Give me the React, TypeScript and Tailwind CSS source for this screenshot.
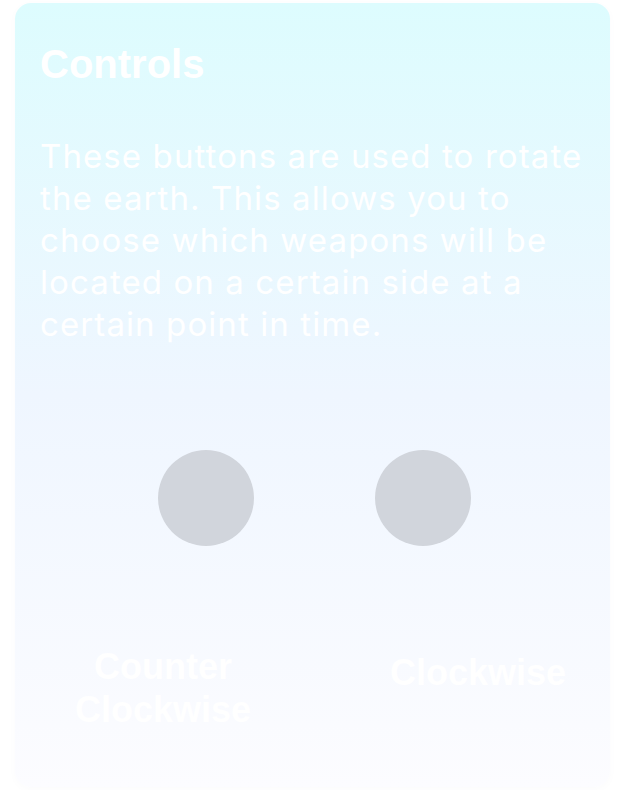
import React from 'react';

const Controls: React.FC = () => {
    return (
        <div className="min-h-[790px] bg-white pt-[3px]">
            <div className="ml-[15px] w-[595px] rounded-2xl bg-gradient-to-b from-[#ddfcfe] via-[#eff6ff] to-[#fcfcff] px-[25px] pt-10 pb-[56px] shadow-[0_2px_6px_rgba(120,120,160,0.03)]">
                <h1 className="font-['Liberation_Sans',Arial,sans-serif] text-[40px] font-bold leading-[42px] text-white">
                    Controls
                </h1>
                <p className="mt-[50px] font-['Inter',sans-serif] text-[33px] leading-[42px] tracking-[1.1px] text-white">
                    These buttons are used to rotate the earth. This allows you to choose which weapons will be located on a certain side at a certain point in time.
                </p>

                <div className="mt-[105px] ml-[118px] flex gap-[121px]">
                    <button type="button" aria-label="Rotate counter clockwise" className="size-24 rounded-full bg-gray-300" />
                    <button type="button" aria-label="Rotate clockwise" className="size-24 rounded-full bg-gray-300" />
                </div>

                <div className="mt-[99px] ml-[23px] flex items-start font-['Liberation_Sans',Arial,sans-serif] text-[36px] font-bold leading-[43px] text-white">
                    <span className="w-[200px] text-center">Counter Clockwise</span>
                    <span className="ml-[115px] mt-[6px] w-[200px] text-center">Clockwise</span>
                </div>
            </div>
        </div>
    );
};

export default function App() {
    return <Controls />;
}
